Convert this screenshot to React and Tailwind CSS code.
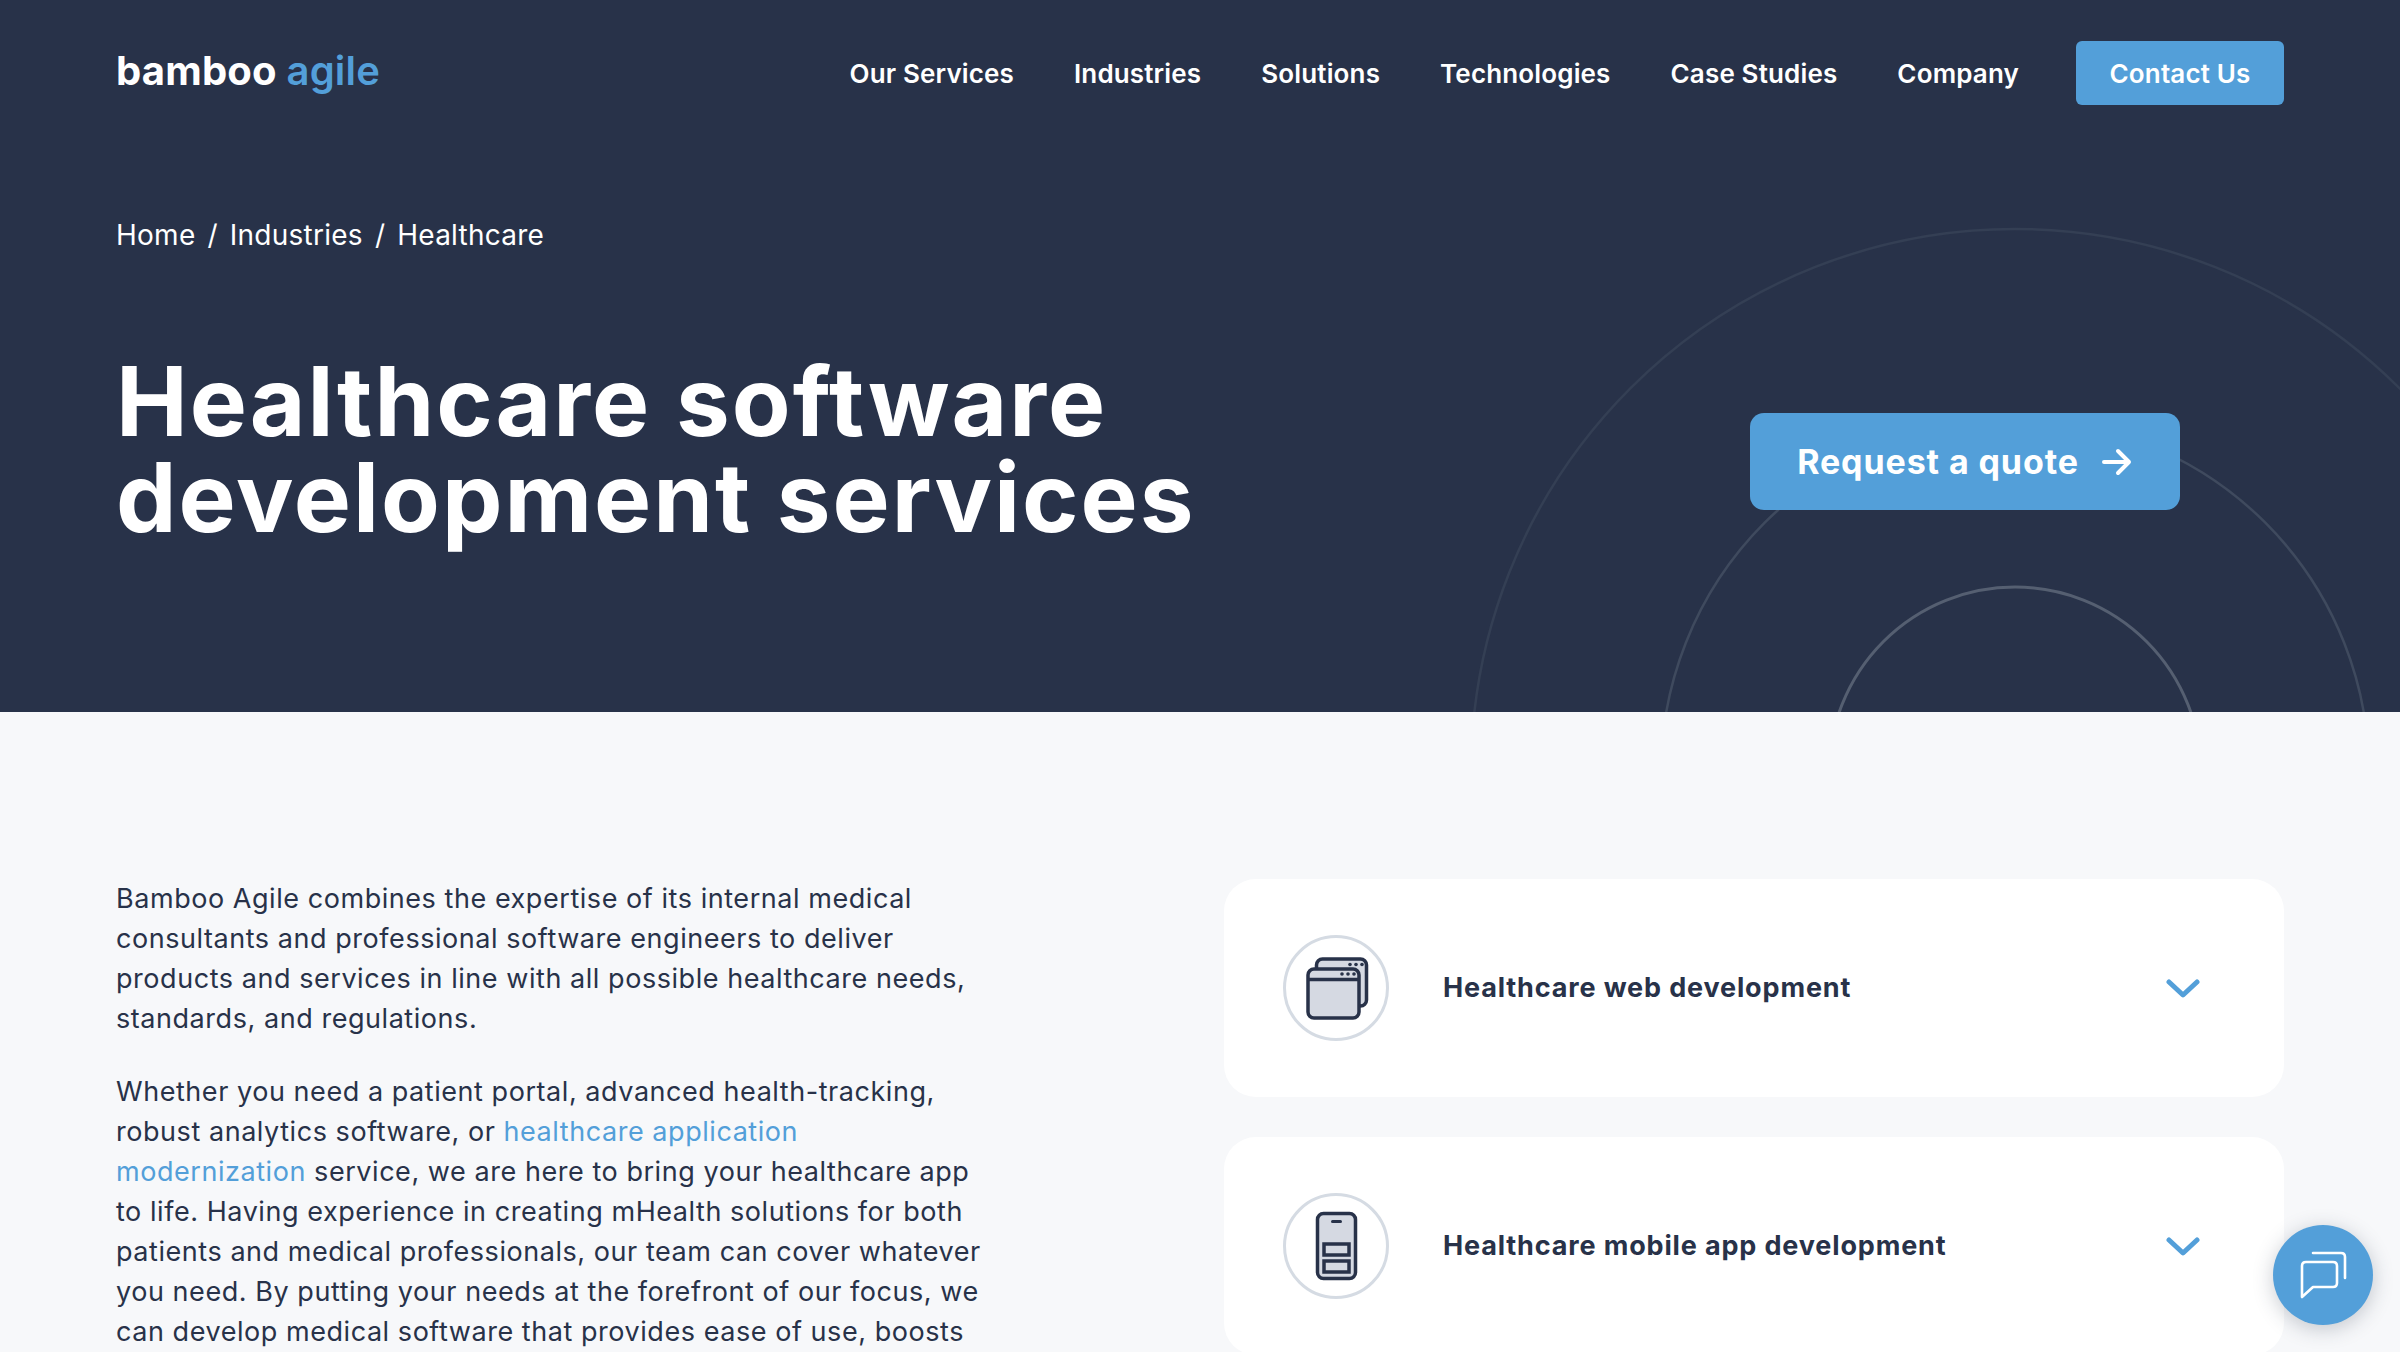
const font = { fontFamily: 'Inter, "Liberation Sans", sans-serif' };

function Rings() {
  return (
    <svg className="absolute left-0 top-0 w-[2400px] h-[712px]" viewBox="0 0 2400 712" fill="none">
      <circle cx="2015" cy="773" r="544" stroke="#343f54" strokeWidth="2.5" />
      <circle cx="2015" cy="773" r="354" stroke="#3f4a5e" strokeWidth="2.5" />
      <circle cx="2015" cy="773" r="186" stroke="#555f71" strokeWidth="3" />
    </svg>
  );
}

function Chevron() {
  return (
    <svg className="mt-[2px]" width="34" height="20" viewBox="0 0 34 20" fill="none">
      <path d="M3 3 L17 16 L31 3" stroke="#539fd9" strokeWidth="5" strokeLinecap="round" strokeLinejoin="round" />
    </svg>
  );
}

function WebIcon() {
  return (
    <svg width="106" height="106" viewBox="0 0 106 106" fill="none">
      <circle cx="53" cy="53" r="51.5" fill="#fff" stroke="#d5dbe3" strokeWidth="3" />
      <rect x="33.5" y="24" width="50" height="47" rx="6" fill="#d5d9e2" stroke="#283249" strokeWidth="3.5" />
      <rect x="25" y="34" width="51" height="49" rx="6" fill="#d5d9e2" stroke="#283249" strokeWidth="3.5" />
      <path d="M25 44.5 H76" stroke="#283249" strokeWidth="3.5" />
      <circle cx="59" cy="39" r="1.8" fill="#283249" />
      <circle cx="65" cy="39" r="1.8" fill="#283249" />
      <circle cx="71" cy="39" r="1.8" fill="#283249" />
      <circle cx="67" cy="29.5" r="1.8" fill="#283249" />
      <circle cx="73" cy="29.5" r="1.8" fill="#283249" />
      <circle cx="79" cy="29.5" r="1.8" fill="#283249" />
    </svg>
  );
}

function PhoneIcon() {
  return (
    <svg width="106" height="106" viewBox="0 0 106 106" fill="none">
      <circle cx="53" cy="53" r="51.5" fill="#fff" stroke="#d5dbe3" strokeWidth="3" />
      <rect x="34.5" y="20.5" width="38" height="65" rx="6" fill="#d5d9e2" stroke="#283249" strokeWidth="3.5" />
      <path d="M49.5 28.5 H57.5" stroke="#283249" strokeWidth="3" strokeLinecap="round" />
      <rect x="41" y="51" width="25" height="11" fill="#d5d9e2" stroke="#283249" strokeWidth="3.5" />
      <rect x="41" y="68" width="25" height="11" fill="#d5d9e2" stroke="#283249" strokeWidth="3.5" />
    </svg>
  );
}

function ChatIcon() {
  return (
    <svg width="48" height="48" viewBox="0 0 48 48" fill="none" stroke="#fff" strokeWidth="2.6" strokeLinecap="round" strokeLinejoin="round">
      <path d="M14 2 H42 Q46 2 46 6 V27" />
      <path d="M7 11 H34 Q38 11 38 15 V32 Q38 36 34 36 H14 L3 46 V15 Q3 11 7 11 Z" />
    </svg>
  );
}

function Card({ icon, title }) {
  return (
    <div className="flex h-[218px] shrink-0 items-center rounded-[32px] bg-white pl-[59px] pr-[84px]">
      {icon}
      <div className="ml-[54px] flex-1 text-[27px] font-bold tracking-[0.85px] text-[#283249]">{title}</div>
      <Chevron />
    </div>
  );
}

export default function App() {
  const nav = ['Our Services', 'Industries', 'Solutions', 'Technologies', 'Case Studies', 'Company'];
  return (
    <div style={font} className="relative h-[1352px] overflow-hidden bg-[#f7f8fa] text-[#283249]">
      <section className="relative h-[712px] overflow-hidden bg-[#283249] px-[116px] text-white">
        <Rings />
        <header className="relative flex h-[146px] items-center">
          <div className="-mt-[5px] text-[40px] font-bold leading-none tracking-[0.2px]">
            bamboo <span className="font-semibold text-[#539fd9]">agile</span>
          </div>
          <nav className="ml-auto flex items-center gap-[60px] text-[26px] font-semibold tracking-[0.15px]">
            {nav.map((n) => (
              <span key={n}>{n}</span>
            ))}
            <span className="-ml-[3px] flex h-[64px] w-[208px] items-center justify-center rounded-[6px] bg-[#539fd9]">
              Contact Us
            </span>
          </nav>
        </header>
        <div className="relative mt-[72px] flex gap-[12px] text-[28px] leading-[34px] tracking-[0.25px]">
          <span>Home</span>
          <span>/</span>
          <span>Industries</span>
          <span>/</span>
          <span>Healthcare</span>
        </div>
        <div className="relative mt-[101px] flex items-start justify-between pr-[104px]">
          <h1 className="text-[96px] font-bold leading-[96px] tracking-[2px]">
            Healthcare software
            <br />
            development services
          </h1>
          <div className="mt-[60px] flex h-[97px] w-[430px] items-center justify-center gap-[22px] rounded-[14px] bg-[#539fd9] text-[34px] font-bold tracking-[0.9px]">
            Request a quote
            <svg width="32" height="28" viewBox="0 0 32 28" fill="none" stroke="#fff" strokeWidth="4" strokeLinecap="round" strokeLinejoin="round">
              <path d="M3 14 H28 M17 3 L28 14 L17 25" />
            </svg>
          </div>
        </div>
      </section>

      <main className="flex items-start px-[116px] pt-[167px]">
        <div className="w-[870px] shrink-0 text-[27px] leading-[40px] tracking-[0.55px]">
          <p>
            Bamboo Agile combines the expertise of its internal medical
            <br />
            consultants and professional software engineers to deliver
            <br />
            products and services in line with all possible healthcare needs,
            <br />
            standards, and regulations.
          </p>
          <p className="mt-[33px]">
            Whether you need a patient portal, advanced health-tracking,
            <br />
            robust analytics software, or{' '}
            <span className="text-[#539fd9]">
              healthcare application
              <br />
              modernization
            </span>{' '}
            service, we are here to bring your healthcare app
            <br />
            to life. Having experience in creating mHealth solutions for both
            <br />
            patients and medical professionals, our team can cover whatever
            <br />
            you need. By putting your needs at the forefront of our focus, we
            <br />
            can develop medical software that provides ease of use, boosts
          </p>
        </div>
        <div className="ml-[238px] flex w-[1060px] shrink-0 flex-col gap-[40px]">
          <Card icon={<WebIcon />} title="Healthcare web development" />
          <Card icon={<PhoneIcon />} title="Healthcare mobile app development" />
        </div>
      </main>

      <div className="fixed left-[2273px] top-[1225px] flex h-[100px] w-[100px] items-center justify-center rounded-full bg-[#539fd9] shadow-[0_4px_20px_rgba(40,50,73,0.25)]">
        <ChatIcon />
      </div>
    </div>
  );
}
